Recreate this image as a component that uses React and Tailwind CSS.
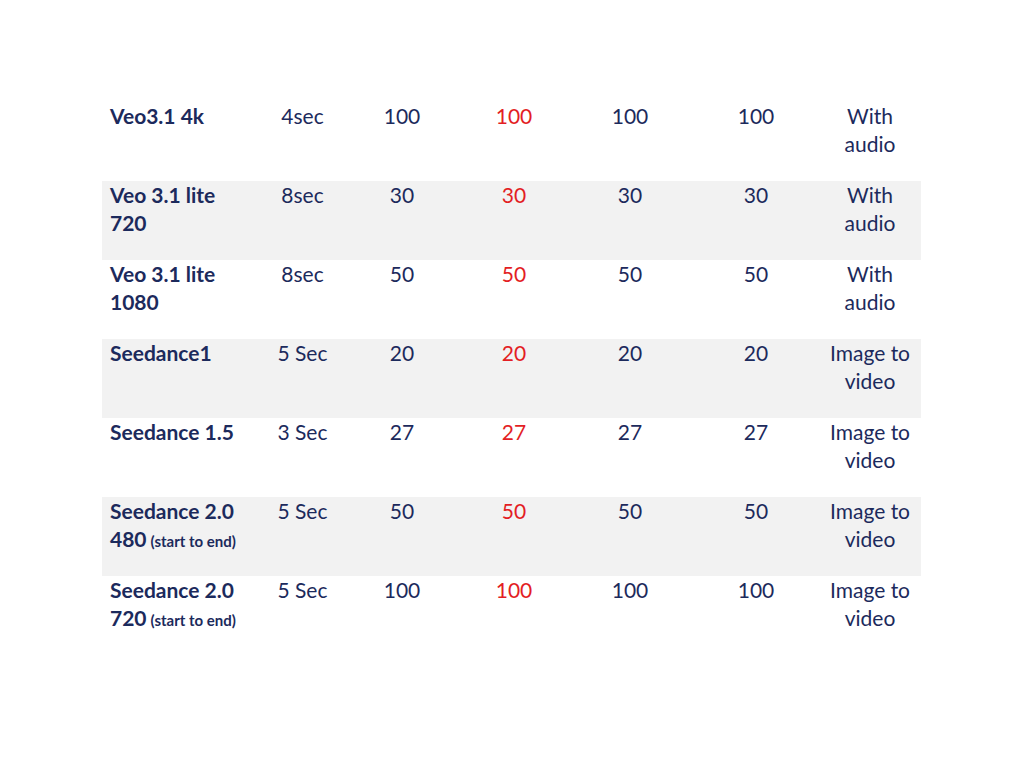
const rows = [
  { name: "Veo3.1 4k", dur: "4sec", v: ["100", "100", "100", "100"], note: ["With", "audio"] },
  { name: "Veo 3.1 lite", name2: "720", dur: "8sec", v: ["30", "30", "30", "30"], note: ["With", "audio"] },
  { name: "Veo 3.1 lite", name2: "1080", dur: "8sec", v: ["50", "50", "50", "50"], note: ["With", "audio"] },
  { name: "Seedance1", dur: "5 Sec", v: ["20", "20", "20", "20"], note: ["Image to", "video"] },
  { name: "Seedance 1.5", dur: "3 Sec", v: ["27", "27", "27", "27"], note: ["Image to", "video"] },
  { name: "Seedance 2.0", name2: "480", extra: true, dur: "5 Sec", v: ["50", "50", "50", "50"], note: ["Image to", "video"] },
  { name: "Seedance 2.0", name2: "720", extra: true, dur: "5 Sec", v: ["100", "100", "100", "100"], note: ["Image to", "video"] },
];

const App = () => {
  return (
    <div
      className="min-h-screen bg-white pt-[102px] pl-[102px] text-[#1c2a5c]"
      style={{ fontFamily: "Lato, 'Open Sans', sans-serif" }}
    >
      <div className="w-[819px]">
        {rows.map((r, i) => (
          <div
            key={i}
            className={`grid h-[79px] grid-cols-[160px_81px_118px_106px_126px_126px_102px] text-[21px] leading-[28px] ${
              i % 2 === 1 ? "bg-[#f2f2f2]" : ""
            }`}
          >
            <div className="pl-2 font-bold">
              <div>{r.name}</div>
              {r.name2 && (
                <div>
                  {r.name2}
                  {r.extra && <span className="ml-1 text-[15px]">(start to end)</span>}
                </div>
              )}
            </div>
            <div className="text-center">{r.dur}</div>
            <div className="text-center">{r.v[0]}</div>
            <div className="text-center text-[#e31e24]">{r.v[1]}</div>
            <div className="text-center">{r.v[2]}</div>
            <div className="text-center">{r.v[3]}</div>
            <div className="text-center">
              <div>{r.note[0]}</div>
              <div>{r.note[1]}</div>
            </div>
          </div>
        ))}
      </div>
    </div>
  );
};

export default App;
